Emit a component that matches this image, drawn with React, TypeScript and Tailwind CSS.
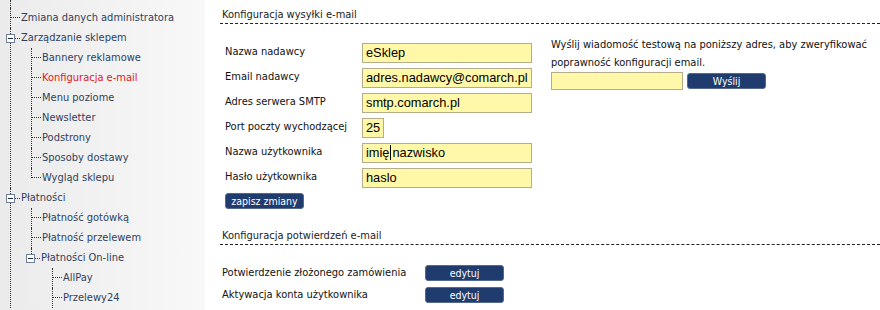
import React from "react";

type Node = { label: string; active?: boolean; open?: boolean; more?: boolean; children?: Node[] };

// the list is scrolled: lines below Przelewy24 and Płatności keep going past the bottom edge
const tree: Node[] = [
  { label: "Zmiana danych administratora" },
  {
    label: "Zarządzanie sklepem",
    open: true,
    children: [
      { label: "Bannery reklamowe" },
      { label: "Konfiguracja e-mail", active: true },
      { label: "Menu poziome" },
      { label: "Newsletter" },
      { label: "Podstrony" },
      { label: "Sposoby dostawy" },
      { label: "Wygląd sklepu" },
    ],
  },
  {
    label: "Płatności",
    open: true,
    more: true,
    children: [
      { label: "Płatność gotówką" },
      { label: "Płatność przelewem" },
      {
        label: "Płatności On-line",
        open: true,
        children: [{ label: "AllPay" }, { label: "Przelewy24", more: true }],
      },
    ],
  },
];

// small minus box sitting on the tree line
function MinusBox() {
  return (
    <span className="-ml-[5px] flex h-[9px] w-[9px] shrink-0 items-center justify-center border border-[#6f7f96] bg-white">
      <span className="h-px w-[5px] bg-[#1c2a44]" />
    </span>
  );
}

function TreeItem({ node, last }: { node: Node; last: boolean }) {
  return (
    <div className={last ? "pl-px" : "border-l border-dotted border-[#333]"}>
      <div className="flex h-5 items-center">
        {node.open ? (
          <>
            <div className={"flex h-5 w-0 flex-col" + (last ? " -ml-px" : "")}>
              <div className={"h-[10px]" + (last ? " border-l border-dotted border-[#333]" : "")} />
            </div>
            <MinusBox />
            <div className="h-px w-[5px] border-b border-dotted border-[#333]" />
          </>
        ) : (
          <div className="flex h-5 w-[9px] shrink-0 flex-col">
            <div
              className={
                "h-[10px] border-b border-dotted border-[#333]" + (last ? " -ml-px border-l" : "")
              }
            />
          </div>
        )}
        <span
          className={
            "whitespace-nowrap pl-px " + (node.active ? "text-[#e3151a]" : "text-[#2f3f5e]")
          }
        >
          {node.label}
        </span>
      </div>
      {node.children && (
        <div className="ml-[20px]">
          {node.children.map((c, i) => (
            <TreeItem
              key={c.label}
              node={c}
              last={i === node.children!.length - 1 && !c.more}
            />
          ))}
        </div>
      )}
    </div>
  );
}

function Btn({ children, w }: { children: React.ReactNode; w: string }) {
  return (
    <button
      className={
        "flex h-4 items-center justify-center rounded-[3px] border border-[#54698f] bg-[#203c6e] text-[10.5px] leading-none text-white " +
        w
      }
    >
      {children}
    </button>
  );
}

function Field({ label, value, w = "w-[170px]", caret }: { label: string; value: string; w?: string; caret?: boolean }) {
  return (
    <div className="flex h-[25px] items-center">
      <div className="w-[142px] shrink-0 pl-[5px]">{label}</div>
      <div
        className={
          "flex h-[20px] items-center overflow-hidden border border-[#b5ad8a] bg-[#fff8a8] pl-[3px] font-['Liberation_Sans',Arial,sans-serif] text-[12.8px] text-black " +
          w
        }
      >
        {caret ? (
          <>
            imię<span className="mx-px h-[15px] w-px bg-black" />nazwisko
          </>
        ) : (
          value
        )}
      </div>
    </div>
  );
}

export default function App() {
  return (
    <div className="flex h-[310px] w-[880px] overflow-hidden bg-white font-['DejaVu_Sans_Condensed','DejaVu_Sans',Tahoma,sans-serif] text-[11px] text-[#111]">
      {/* left menu tree */}
      <aside className="w-[205px] shrink-0 bg-gradient-to-r from-[#ebebeb] to-[#f8f8f8] pl-[10px]">
        <div className="h-[8px] border-l border-dotted border-[#333]" />
        {tree.map((n, i) => (
          <TreeItem key={n.label} node={n} last={i === tree.length - 1 && !n.more} />
        ))}
      </aside>

      {/* content */}
      <main className="flex-1 pl-[15px] pt-[7px]">
        <div className="border-b border-dashed border-[#222] pl-[2px] leading-[16px] text-[#222]">
          Konfiguracja wysyłki e-mail
        </div>

        <div className="mt-[16px] flex">
          <div className="w-[331px] shrink-0">
            <Field label="Nazwa nadawcy" value="eSklep" />
            <Field label="Email nadawcy" value="adres.nadawcy@comarch.pl" />
            <Field label="Adres serwera SMTP" value="smtp.comarch.pl" />
            <Field label="Port poczty wychodzącej" value="25" w="w-[22px]" />
            <Field label="Nazwa użytkownika" value="" caret />
            <Field label="Hasło użytkownika" value="haslo" />
            <div className="mt-[3px] pl-[5px]">
              <Btn w="w-[79px]">zapisz zmiany</Btn>
            </div>
          </div>
          <div className="-mt-[4px] leading-[18px]">
            <p>Wyślij wiadomość testową na poniższy adres, aby zweryfikować</p>
            <p>poprawność konfiguracji email.</p>
            <div className="flex items-center gap-[4px]">
              <div className="h-[18px] w-[132px] border border-[#b5ad8a] bg-[#fff8a8]" />
              <Btn w="w-[79px]">Wyślij</Btn>
            </div>
          </div>
        </div>

        <div className="mt-[19px] border-b border-dashed border-[#222] pl-[2px] leading-[16px] text-[#222]">
          Konfiguracja potwierdzeń e-mail
        </div>

        <div className="mt-[20px] flex flex-col gap-[5px] pl-[2px]">
          <div className="flex items-center">
            <span className="w-[203px]">Potwierdzenie złożonego zamówienia</span>
            <Btn w="w-[79px]">edytuj</Btn>
          </div>
          <div className="flex items-center">
            <span className="w-[203px]">Aktywacja konta użytkownika</span>
            <Btn w="w-[79px]">edytuj</Btn>
          </div>
        </div>
      </main>
    </div>
  );
}
